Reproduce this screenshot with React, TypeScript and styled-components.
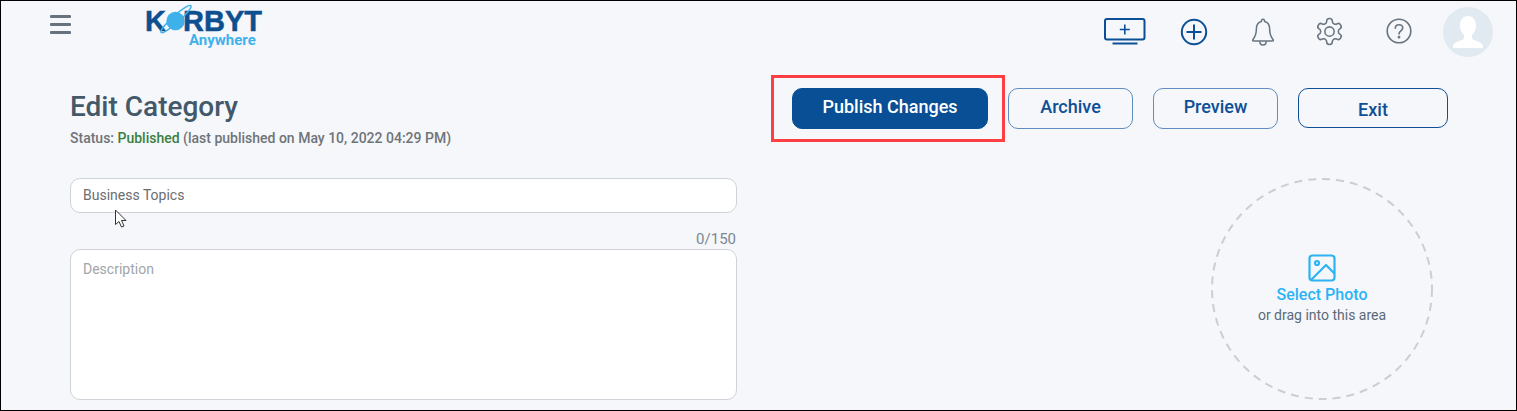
import React from "react";
import styled, { createGlobalStyle } from "styled-components";

const Global = createGlobalStyle`
  html, body { margin: 0; padding: 0; background: #f5f7fb; }
  * { box-sizing: border-box; }
  body { font-family: Roboto, "Liberation Sans", sans-serif; }
`;

const Frame = styled.div`
  position: relative;
  width: 1517px;
  height: 411px;
  border: 1px solid #000;
  background: #f5f7fb;
  overflow: hidden;
`;

const Header = styled.header`
  display: flex;
  align-items: flex-start;
  height: 64px;
  padding: 6px 23px 0 49px;
`;

const Burger = styled.button`
  display: flex;
  flex-direction: column;
  justify-content: space-between;
  width: 21px;
  height: 19px;
  margin-top: 8px;
  padding: 0;
  border: 0;
  background: none;
  span { display: block; height: 3px; background: #66727e; border-radius: 1px; }
`;

const Logo = styled.div`
  position: relative;
  width: 120px;
  height: 42px;
  margin-left: 74px;
`;

const LogoWord = styled.div`
  display: flex;
  align-items: center;
  height: 24px;
  margin-top: 2px;
  font-family: "Liberation Sans", Arial, sans-serif;
  font-weight: 700;
  font-size: 29px;
  line-height: 24px;
  color: #0e4f8f;
  -webkit-text-stroke: 0.5px #0e4f8f;
`;

const LogoK = styled.span`
  width: 38px;
`;

const LogoPlanet = styled.svg`
  position: absolute;
  left: 15px;
  top: -3px;
`;

const LogoSub = styled.div`
  font-family: Roboto, sans-serif;
  font-weight: 700;
  font-size: 15px;
  line-height: 16px;
  margin: -1px 0 0 44px;
  color: #3fb1ea;
`;

const Icons = styled.nav`
  display: flex;
  align-items: flex-start;
  margin-left: auto;
`;

const IconCell = styled.div<{ $pull?: number; $lift?: number }>`
  display: flex;
  justify-content: center;
  width: 69px;
  height: 50px;
  padding-top: ${(p) => 11 - (p.$lift ?? 0)}px;
  margin-right: ${(p) => -(p.$pull ?? 0)}px;
`;

const Avatar = styled.div`
  display: flex;
  align-items: center;
  justify-content: center;
  width: 50px;
  height: 50px;
  margin: 0 0 0 10px;
  border-radius: 50%;
  background: #e1e9f1;
`;

const Main = styled.main`
  padding: 9px 83px 0 69px;
`;

const TopRow = styled.div`
  display: flex;
  height: 66px;
`;

const TitleBlock = styled.div`
  width: 722px;
  padding-top: 17px;
  flex: none;
`;

const Title = styled.h1`
  margin: 0;
  font-size: 28px;
  line-height: 32px;
  font-weight: 500;
  color: #43596a;
`;

const Status = styled.p`
  margin: 7px 0 0;
  font-size: 14px;
  line-height: 16px;
  font-weight: 500;
  color: #6f7478;
`;

const Published = styled.span`
  color: #3b8040;
`;

const Actions = styled.div`
  display: flex;
  align-items: flex-start;
  padding-top: 14px;
`;

const Button = styled.button<{ $w: number; $primary?: boolean; $ml?: number }>`
  position: relative;
  width: ${(p) => p.$w}px;
  height: 41px;
  margin-left: ${(p) => p.$ml ?? 0}px;
  padding: 0 0 4px;
  border-radius: 10px;
  border: 1px solid ${(p) => (p.$primary ? "#084f96" : "#5f8dbd")};
  background: ${(p) => (p.$primary ? "#084f96" : "transparent")};
  color: ${(p) => (p.$primary ? "#fff" : "#0e4f96")};
  font-family: Roboto, sans-serif;
  font-size: 18px;
  font-weight: 500;
`;

const Highlight = styled.div`
  position: absolute;
  left: -22px;
  top: -14px;
  width: 234px;
  height: 67px;
  border: 3px solid #fd3f43;
  pointer-events: none;
`;

const ExitButton = styled(Button)`
  height: 40px;
  border-color: #0e4f96;
  padding: 2px 0 0;
`;

const FormRow = styled.div`
  display: flex;
  justify-content: space-between;
  margin-top: 38px;
`;

const Form = styled.div`
  position: relative;
  width: 667px;
`;

const NameField = styled.div`
  display: flex;
  align-items: center;
  height: 35px;
  padding: 0 12px 2px;
  background: #fff;
  border: 1px solid #cfd2d6;
  border-radius: 10px;
  font-size: 14px;
  color: #6a6d70;
`;

const Pointer = styled.svg`
  position: absolute;
  left: 44px;
  top: 31px;
`;

const Counter = styled.div`
  margin-top: 18px;
  padding-right: 1px;
  text-align: right;
  font-size: 15px;
  line-height: 16px;
  color: #7b8791;
`;

const Description = styled.div`
  height: 151px;
  margin-top: 2px;
  padding: 11px 12px;
  background: #fff;
  border: 1px solid #cfd2d6;
  border-radius: 10px;
  font-size: 14px;
  line-height: 17px;
  color: #a2a5a8;
`;

const PhotoDrop = styled.div`
  display: flex;
  flex-direction: column;
  align-items: center;
  justify-content: center;
  width: 222px;
  height: 222px;
  border-radius: 50%;
`;

const Dashes = styled.svg`
  position: absolute;
`;

const PhotoLabel = styled.div`
  margin-top: 3px;
  font-size: 16px;
  line-height: 20px;
  font-weight: 500;
  color: #2cb3f5;
`;

const PhotoHint = styled.div`
  font-size: 14px;
  line-height: 20px;
  color: #5b6b78;
`;

const MonitorPlus = () => (
  <svg width="42" height="27" viewBox="0 0 42 27" fill="none" stroke="#0b4f96">
    <rect x="1" y="1" width="39.5" height="20.5" rx="2" strokeWidth="2" />
    <path d="M8.5 25.5h25" strokeWidth="2" />
    <path d="M20.8 6.5v10M15.8 11.5h10" strokeWidth="1.6" />
  </svg>
);

const CirclePlus = () => (
  <svg width="28" height="28" viewBox="0 0 28 28" fill="none" stroke="#0b4f96" strokeWidth="2">
    <circle cx="14" cy="14" r="12.2" />
    <path d="M14 6.5v15M6.5 14h15" />
  </svg>
);

const Bell = () => (
  <svg width="24" height="29" viewBox="0 0 24 29" fill="none" stroke="#68747f" strokeWidth="1.5" strokeLinejoin="round">
    <path d="M12 1.2c1 0 1.6.8 1.6 2.2 3.6.8 5 3.6 5 7.4 0 5 1.2 8 3.6 11 .4.6 0 1.2-.6 1.2H2.4c-.6 0-1-.6-.6-1.2 2.4-3 3.6-6 3.6-11 0-3.8 1.4-6.6 5-7.4C10.400 2 11 1.200 12 1.200z" />
    <path d="M8.800 23.200c0 2.400 1.400 3.800 3.200 3.800s3.200-1.400 3.200-3.800" />
  </svg>
);

const Gear = () => (
  <svg width="31" height="31" viewBox="0 0 24 24" fill="none" stroke="#68747f" strokeWidth="1.2" strokeLinejoin="round">
    <path d="M12.220 2h-.44a2 2 0 0 0-2 2v.18a2 2 0 0 1-1 1.730l-.43.250a2 2 0 0 1-2 0l-.150-.080a2 2 0 0 0-2.730.730l-.220.380a2 2 0 0 0 .730 2.730l.150.100a2 2 0 0 1 1 1.720v.510a2 2 0 0 1-1 1.740l-.150.090a2 2 0 0 0-.730 2.730l.220.380a2 2 0 0 0 2.730.730l.150-.080a2 2 0 0 1 2 0l.430.250a2 2 0 0 1 1 1.730V20a2 2 0 0 0 2 2h.440a2 2 0 0 0 2-2v-.180a2 2 0 0 1 1-1.730l.430-.250a2 2 0 0 1 2 0l.150.080a2 2 0 0 0 2.730-.730l.220-.390a2 2 0 0 0-.730-2.730l-.150-.080a2 2 0 0 1-1-1.740v-.500a2 2 0 0 1 1-1.740l.150-.090a2 2 0 0 0 .730-2.730l-.220-.380a2 2 0 0 0-2.730-.730l-.150.080a2 2 0 0 1-2 0l-.430-.250a2 2 0 0 1-1-1.730V4a2 2 0 0 0-2-2z" />
    <circle cx="12" cy="12" r="3.600" />
  </svg>
);

const Help = () => (
  <svg width="26" height="26" viewBox="0 0 26 26" fill="none" stroke="#68747f" strokeWidth="1.6">
    <circle cx="13" cy="13" r="11.800" />
    <path d="M9.300 10.200c0-2.200 1.600-3.500 3.700-3.500s3.700 1.300 3.700 3.200c0 2.900-3.700 2.900-3.700 6" strokeLinecap="round" />
    <circle cx="13" cy="19.200" r="0.600" fill="#68747f" />
  </svg>
);

const User = () => (
  <svg width="32" height="34" viewBox="0 0 32 34" fill="#fff">
    <path d="M16 1c5 0 8 4 8 9.500 0 4-1.500 7.500-4 9.500v2.500c0 1.500 1 2.200 4 3.300 4 1.400 7 2.700 7 5.700 0 1-.6 1.500-1.500 1.500H2.500C1.600 33 1 32.500 1 31.500c0-3 3-4.300 7-5.700 3-1.100 4-1.800 4-3.300V20c-2.500-2-4-5.500-4-9.500C8 5 11 1 16 1z" />
  </svg>
);

const PhotoIcon = () => (
  <svg width="28" height="28" viewBox="0 0 28 28" fill="none" stroke="#2cb3f5" strokeWidth="2.200" strokeLinejoin="round">
    <rect x="1.500" y="1.500" width="25" height="25" rx="3" />
    <circle cx="9" cy="9" r="2" />
    <path d="M3 26l15-15 8.500 8.500" />
  </svg>
);

export default function App() {
  return (
    <>
      <Global />
      <Frame>
        <Header>
          <Burger aria-label="Menu">
            <span />
            <span />
            <span />
          </Burger>
          <Logo>
            <LogoWord>
              <LogoK>K</LogoK>
              <span>RBYT</span>
            </LogoWord>
            <LogoPlanet width="34" height="32" viewBox="0 0 34 32" fill="none">
              <ellipse cx="16" cy="15" rx="20" ry="3.500" transform="rotate(-42 16 15)" stroke="#3fb1ea" strokeWidth="1.400" />
              <circle cx="15.500" cy="17" r="9.200" fill="#3fb1ea" />
            </LogoPlanet>
            <LogoSub>Anywhere</LogoSub>
          </Logo>
          <Icons>
            <IconCell><MonitorPlus /></IconCell>
            <IconCell><CirclePlus /></IconCell>
            <IconCell $pull={2}><Bell /></IconCell>
            <IconCell $lift={2}><Gear /></IconCell>
            <IconCell><Help /></IconCell>
            <Avatar><User /></Avatar>
          </Icons>
        </Header>
        <Main>
          <TopRow>
            <TitleBlock>
              <Title>Edit Category</Title>
              <Status>
                Status: <Published>Published</Published> (last published on May 10, 2022 04:29 PM)
              </Status>
            </TitleBlock>
            <Actions>
              <Button $primary $w={196}>
                Publish Changes
                <Highlight />
              </Button>
              <Button $w={125} $ml={20}>Archive</Button>
              <Button $w={125} $ml={20}>Preview</Button>
              <ExitButton $w={150} $ml={20}>Exit</ExitButton>
            </Actions>
          </TopRow>
          <FormRow>
            <Form>
              <NameField>Business Topics</NameField>
              <Pointer width="14" height="20" viewBox="0 0 14 20" fill="#fff" stroke="#333" strokeWidth="1">
                <path d="M1.500 1v14.500l3.500-3 2.500 5.500 2.500-1-2.500-5.500h4.500z" />
              </Pointer>
              <Counter>0/150</Counter>
              <Description>Description</Description>
            </Form>
            <PhotoDrop>
              <Dashes width="222" height="222" viewBox="0 0 222 222" fill="none" stroke="#ccced2" strokeWidth="2" strokeDasharray="8 6">
                <circle cx="111" cy="111" r="110" />
              </Dashes>
              <PhotoIcon />
              <PhotoLabel>Select Photo</PhotoLabel>
              <PhotoHint>or drag into this area</PhotoHint>
            </PhotoDrop>
          </FormRow>
        </Main>
      </Frame>
    </>
  );
}
